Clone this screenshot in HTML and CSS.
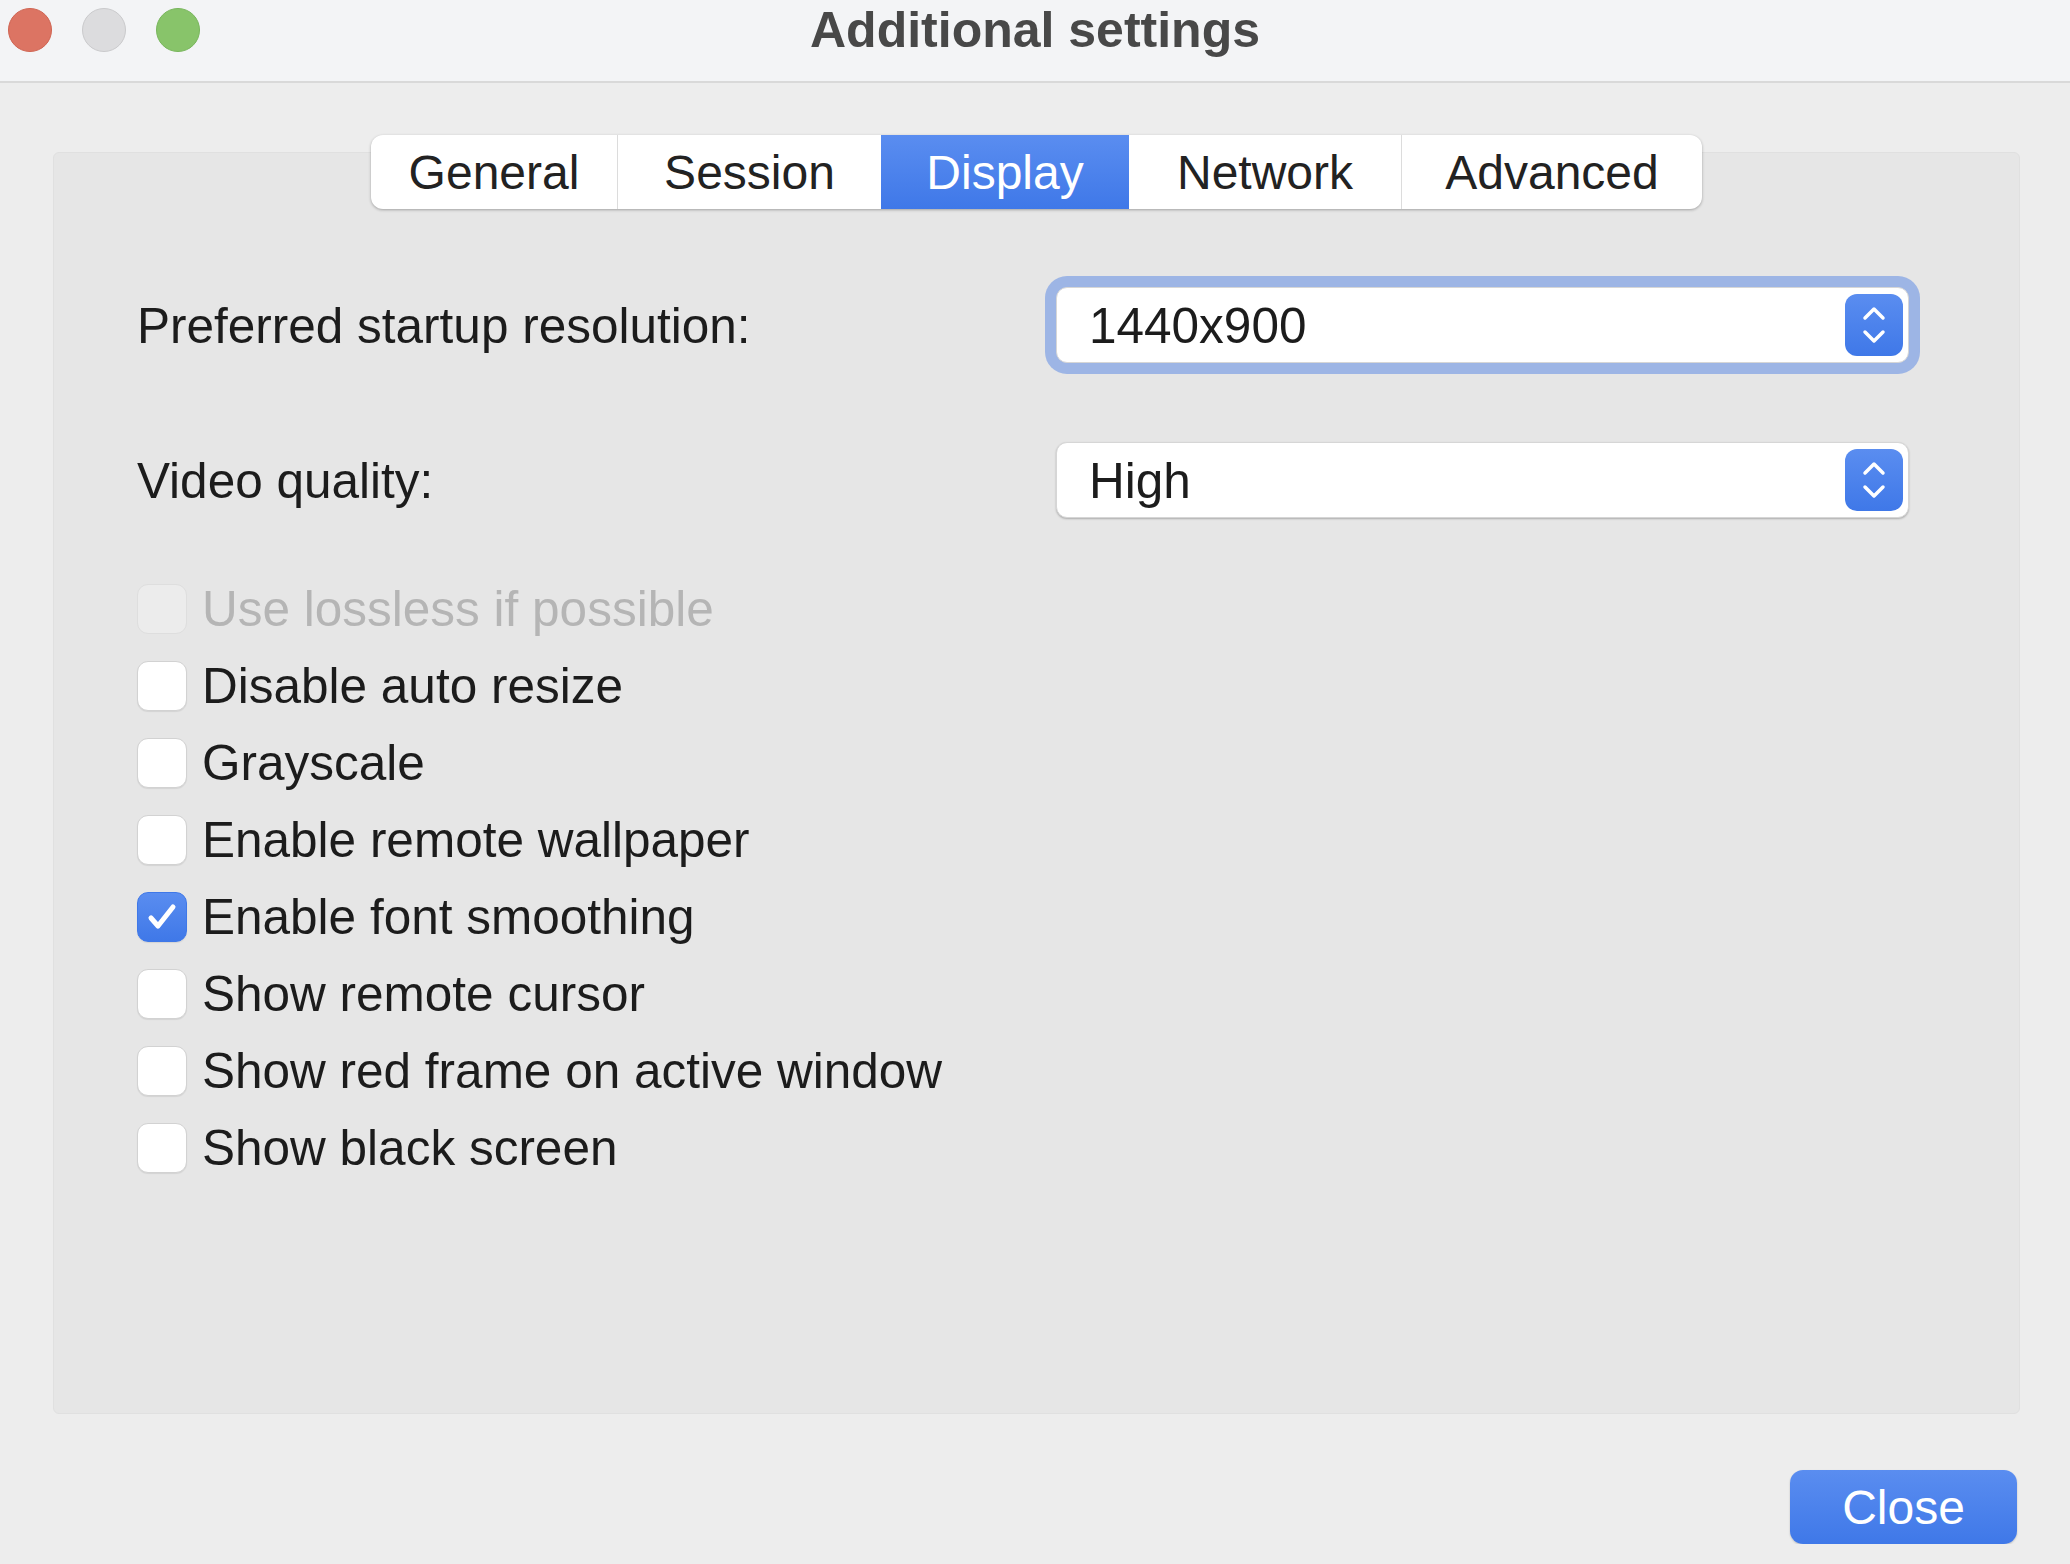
FILE: index.html
```html
<!DOCTYPE html>
<html lang="en">
<head>
    <meta charset="UTF-8">
    <meta name="viewport" content="width=device-width, initial-scale=1.0">
    <title>Additional settings</title>
    <link rel="stylesheet" href="styles.css">
</head>
<body>
    <div class="titlebar">
        <div class="lights">
            <span class="light red"></span>
            <span class="light gray"></span>
            <span class="light green"></span>
        </div>
        <div class="title">Additional settings</div>
        <div></div>
    </div>

    <div class="window-body">
        <div class="panel">
            <div class="tabs-row">
                <div class="tabs">
                    <div class="tab">General</div>
                    <div class="tab">Session</div>
                    <div class="tab active">Display</div>
                    <div class="tab">Network</div>
                    <div class="tab">Advanced</div>
                </div>
            </div>

            <div class="form-row first">
                <label>Preferred startup resolution:</label>
                <div class="select focused">
                    <span>1440x900</span>
                    <span class="stepper">
                        <svg width="34" height="52" viewBox="0 0 34 52"><path d="M8 19 L17 10 L26 19 M8 33 L17 42 L26 33" fill="none" stroke="#fff" stroke-width="3.5" stroke-linecap="round" stroke-linejoin="round"/></svg>
                    </span>
                </div>
            </div>

            <div class="form-row">
                <label>Video quality:</label>
                <div class="select">
                    <span>High</span>
                    <span class="stepper">
                        <svg width="34" height="52" viewBox="0 0 34 52"><path d="M8 19 L17 10 L26 19 M8 33 L17 42 L26 33" fill="none" stroke="#fff" stroke-width="3.5" stroke-linecap="round" stroke-linejoin="round"/></svg>
                    </span>
                </div>
            </div>

            <div class="checks">
                <div class="check disabled"><span class="box"></span>Use lossless if possible</div>
                <div class="check"><span class="box"></span>Disable auto resize</div>
                <div class="check"><span class="box"></span>Grayscale</div>
                <div class="check"><span class="box"></span>Enable remote wallpaper</div>
                <div class="check"><span class="box checked"><svg width="36" height="36" viewBox="0 0 36 36"><path d="M7 19 L14 27 L29 8" fill="none" stroke="#fff" stroke-width="5" stroke-linecap="round" stroke-linejoin="round"/></svg></span>Enable font smoothing</div>
                <div class="check"><span class="box"></span>Show remote cursor</div>
                <div class="check"><span class="box"></span>Show red frame on active window</div>
                <div class="check"><span class="box"></span>Show black screen</div>
            </div>
        </div>

        <div class="footer">
            <button class="close-btn">Close</button>
        </div>
    </div>
</body>
</html>
```

FILE: styles.css
```css
body {
    margin: 0;
    background-color: #ededed;
    font-family: "Liberation Sans", Arial, sans-serif;
    color: #1c1c1c;
}
.titlebar {
    height: 83px;
    box-sizing: border-box;
    padding-bottom: 22px;
    background-color: #f3f4f6;
    border-bottom: 2px solid #d9d9d9;
    display: grid;
    grid-template-columns: 1fr auto 1fr;
    align-items: center;
}
.lights {
    display: flex;
    gap: 30px;
    padding-left: 8px;
}
.light {
    width: 44px;
    height: 44px;
    border-radius: 50%;
    box-sizing: border-box;
}
.red {
    background-color: #dc7463;
    border: 1px solid #d06452;
}
.gray {
    background-color: #dcdcde;
    border: 1px solid #cacacc;
}
.green {
    background-color: #88c46a;
    border: 1px solid #78b65c;
}
.title {
    font-size: 50px;
    font-weight: bold;
    color: #484848;
}
.window-body {
    padding: 69px 50px 0 53px;
}
.panel {
    background-color: #e6e6e6;
    border: 1px solid #e0e0e0;
    border-radius: 6px;
    height: 1262px;
    box-sizing: border-box;
}
.tabs-row {
    display: flex;
    justify-content: center;
    margin-top: -18px;
}
.tabs {
    display: flex;
    height: 74px;
    background-color: #fff;
    border-radius: 12px;
    box-shadow: 0 1px 3px rgba(0, 0, 0, 0.3);
    overflow: hidden;
}
.tab {
    display: flex;
    align-items: center;
    justify-content: center;
    font-size: 48px;
    color: #222;
    border-left: 1px solid #dcdcdc;
}
.tab:nth-child(1) { width: 246px; border-left: none; }
.tab:nth-child(2) { width: 263px; }
.tab:nth-child(3) { width: 248px; }
.tab:nth-child(4) { width: 272px; }
.tab:nth-child(5) { width: 300px; }
.tab.active {
    background: linear-gradient(#5a8df0, #3f78e8);
    color: #fff;
    border-left: none;
}
.tab.active + .tab {
    border-left: none;
}
.form-row {
    display: grid;
    grid-template-columns: 1fr 853px;
    align-items: center;
    padding: 0 110px 0 83px;
    margin-top: 79px;
}
.form-row.first {
    margin-top: 78px;
}
.form-row label {
    font-size: 49.5px;
}
.select {
    height: 76px;
    box-sizing: border-box;
    background-color: #fff;
    border: 1px solid #d6d6d6;
    border-radius: 11px;
    box-shadow: 0 1px 2px rgba(0, 0, 0, 0.25);
    display: flex;
    align-items: center;
    justify-content: space-between;
    padding-left: 32px;
    padding-right: 5px;
    font-size: 49.5px;
}
.select.focused {
    box-shadow: 0 0 0 11px #9db5e5;
}
.stepper {
    width: 58px;
    height: 62px;
    border-radius: 12px;
    background: linear-gradient(#5a8df0, #3f78e8);
    display: flex;
    align-items: center;
    justify-content: center;
}
.checks {
    padding-left: 83px;
    margin-top: 52px;
}
.check {
    display: flex;
    align-items: center;
    gap: 15px;
    height: 77px;
    font-size: 49.5px;
}
.box {
    width: 50px;
    height: 50px;
    box-sizing: border-box;
    background-color: #fff;
    border: 1px solid #d2d2d2;
    border-radius: 11px;
    box-shadow: 0 1px 1px rgba(0, 0, 0, 0.08);
    display: flex;
    align-items: center;
    justify-content: center;
}
.box.checked {
    background: linear-gradient(#5a8df0, #3f78e8);
    border-color: #3f78e8;
}
.check.disabled {
    color: #b5b5b5;
}
.check.disabled .box {
    background-color: #ececec;
    border-color: #dedede;
    box-shadow: none;
}
.footer {
    display: flex;
    justify-content: flex-end;
    padding-top: 56px;
}
.close-btn {
    width: 227px;
    height: 74px;
    margin-right: 3px;
    border: none;
    border-radius: 13px;
    background: linear-gradient(#5a8df0, #3f78e8);
    color: #fff;
    font-family: "Liberation Sans", Arial, sans-serif;
    font-size: 48px;
    box-shadow: 0 1px 2px rgba(0, 0, 0, 0.2);
}
```
